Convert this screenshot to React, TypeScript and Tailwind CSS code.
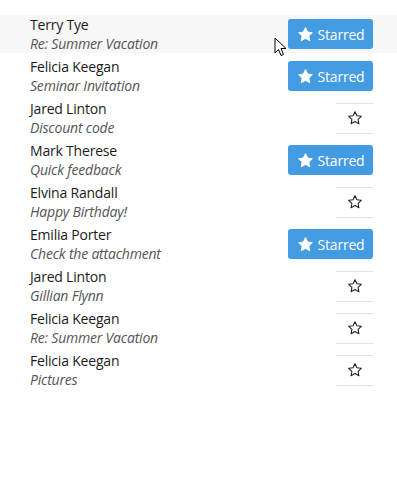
import React from "react";

const rows = [
  { name: "Terry Tye", subject: "Re: Summer Vacation", starred: true, hover: true },
  { name: "Felicia Keegan", subject: "Seminar Invitation", starred: true },
  { name: "Jared Linton", subject: "Discount code", starred: false },
  { name: "Mark Therese", subject: "Quick feedback", starred: true },
  { name: "Elvina Randall", subject: "Happy Birthday!", starred: false },
  { name: "Emilia Porter", subject: "Check the attachment", starred: true },
  { name: "Jared Linton", subject: "Gillian Flynn", starred: false },
  { name: "Felicia Keegan", subject: "Re: Summer Vacation", starred: false },
  { name: "Felicia Keegan", subject: "Pictures", starred: false },
];

const StarPath = "M12 2.5l2.9 6.1 6.6.8-4.9 4.6 1.3 6.6L12 17.3l-5.9 3.3 1.3-6.6-4.9-4.6 6.6-.8z";

function StarFilled() {
  return (
    <svg width="17" height="17" viewBox="0 0 24 24" fill="white">
      <path d={StarPath} strokeLinejoin="round" stroke="white" strokeWidth="1.5" />
    </svg>
  );
}

function StarOutline() {
  return (
    <svg width="16" height="16" viewBox="0 0 24 24" fill="none">
      <path d={StarPath} stroke="#222" strokeWidth="1.6" strokeLinejoin="round" />
    </svg>
  );
}

export default function App() {
  return (
    <div
      className="relative w-[397px] h-[483px] bg-white"
      style={{ fontFamily: '"Open Sans", "Noto Sans", sans-serif' }}
    >
      <div className="flex flex-col gap-[4px] pt-[15px]">
        {rows.map((r, i) => (
          <div
            key={i}
            className={`flex items-center justify-between h-[38px] pl-[30px] pr-[24px] ${
              r.hover ? "bg-[#f7f7f7]" : ""
            }`}
          >
            <div className="flex flex-col">
              <div className="text-[14px] leading-[19px] text-[#1b1b1b] tracking-[-0.2px]">{r.name}</div>
              <div className="text-[14px] leading-[19px] italic text-[#555] tracking-[-0.2px]">{r.subject}</div>
            </div>
            {r.starred ? (
              <button className="flex items-center gap-[4px] h-[30px] w-[85px] justify-center rounded-[3px] bg-[#439be1] text-white text-[14px] tracking-[-0.2px]">
                <StarFilled />
                <span>Starred</span>
              </button>
            ) : (
              <button className="flex items-center justify-center h-[31px] w-[37px] border-y border-[#e2e2e2] bg-white">
                <StarOutline />
              </button>
            )}
          </div>
        ))}
      </div>
      <svg className="absolute left-[274px] top-[37px]" width="14" height="21" viewBox="0 0 14 21">
        <path d="M1 1 L1 16 L4.5 12.5 L7 18.5 L9.5 17.5 L7 11.5 L12 11.5 Z" fill="white" stroke="black" strokeWidth="1" strokeLinejoin="round" />
      </svg>
    </div>
  );
}
